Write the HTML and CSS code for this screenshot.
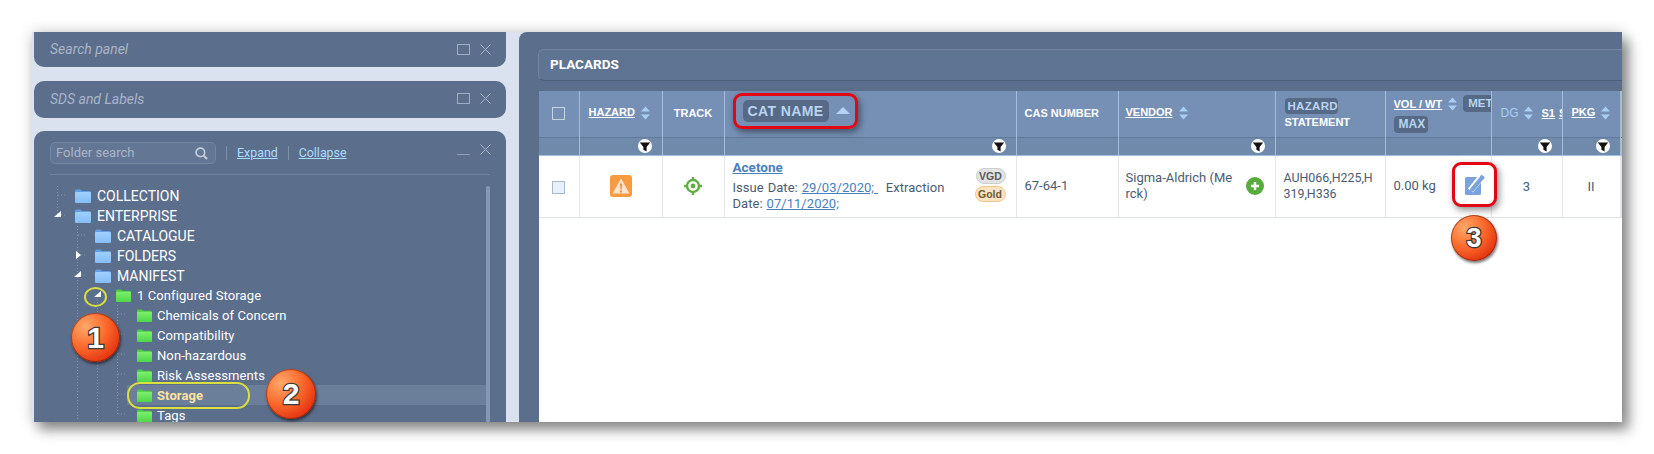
FILE: index.html
```html
<!DOCTYPE html>
<html lang="en">
<head>
<meta charset="utf-8">
<title>Placards</title>
<link rel="stylesheet" href="styles.css">
</head>
<body>
<svg class="defs" width="0" height="0" aria-hidden="true">
  <defs>
    <linearGradient id="gb" x1="0" y1="0" x2="0" y2="1"><stop offset="0" stop-color="#9fd0ff"/><stop offset="1" stop-color="#85bdf7"/></linearGradient>
    <linearGradient id="gg" x1="0" y1="0" x2="0" y2="1"><stop offset="0" stop-color="#7cf06c"/><stop offset="1" stop-color="#4fd748"/></linearGradient>
    <symbol id="folder-blue" viewBox="0 0 16 14"><path d="M0 2q0-1.500 1.500-1.500h4L7 2h7.500Q16 2 16 3.500V12.500Q16 14 14.500 14h-13Q0 14 0 12.500Z" fill="#5f9fe6"/><path d="M0 4q0-1 1-1h14q1 0 1 1v8.500q0 1.500-1.500 1.500h-13Q0 14 0 12.500Z" fill="url(#gb)"/></symbol>
    <symbol id="folder-green" viewBox="0 0 16 14"><path d="M0 2q0-1.500 1.500-1.500h4L7 2h7.500Q16 2 16 3.500V12.500Q16 14 14.500 14h-13Q0 14 0 12.500Z" fill="#4cc846"/><path d="M0 4q0-1 1-1h14q1 0 1 1v8.500q0 1.500-1.500 1.500h-13Q0 14 0 12.500Z" fill="url(#gg)"/></symbol>
    <symbol id="funnel" viewBox="0 0 14 14"><circle cx="7" cy="7" r="7" fill="#fff"/><path d="M1.800 3.500h10.400L8.600 8V12.500L5.400 10.800V8Z" fill="#111"/></symbol>
    <symbol id="sort" viewBox="0 0 9 14"><path d="M4.500 0.500 9 5.500H0ZM4.500 13.500 0 8.500H9Z"/></symbol>
    <symbol id="win-x" viewBox="0 0 11 11"><path d="M0.500 0.500 10.500 10.500M10.500 0.500 0.500 10.500" fill="none" stroke="currentColor" stroke-width="1"/></symbol>
  </defs>
</svg>

<div class="window">
  <aside class="side">
    <section class="panel panel-first">
      <span class="panel-title">Search panel</span>
      <span class="win-btns"><i class="win-square"></i><svg class="win-x"><use href="#win-x"/></svg></span>
    </section>
    <section class="panel panel-second">
      <span class="panel-title">SDS and Labels</span>
      <span class="win-btns"><i class="win-square"></i><svg class="win-x"><use href="#win-x"/></svg></span>
    </section>
    <section class="panel-tree">
      <div class="tree-tools">
        <div class="folder-search">
          <span>Folder search</span>
          <svg class="search-icon" viewBox="0 0 14 14"><circle cx="5.800" cy="5.800" r="4.600" fill="none" stroke="#c3ccd9" stroke-width="1.800"/><path d="M9.200 9.200 13 13" stroke="#c3ccd9" stroke-width="2.200"/></svg>
        </div>
        <a class="tool-link" href="#">Expand</a>
        <a class="tool-link" href="#">Collapse</a>
        <span class="win-btns tree-btns"><i class="win-min"></i><svg class="win-x"><use href="#win-x"/></svg></span>
      </div>
      <div class="tree">
        <svg class="tree-lines" width="452" height="236">
          <path d="M23.500 1V30M24 10H32M24 30H31M43.500 41V236M44 50H51M44 70H51M44 90H51M63.500 114V236M83.500 120V229M84 129H91M84 149H91M84 169H91M84 189H91M84 209H91M84 229H91"/>
        </svg>
        <div class="row l0 caps"><svg class="folder"><use href="#folder-blue"/></svg>COLLECTION</div>
        <div class="row l0 caps"><svg class="arrow arrow-open a-enterprise" viewBox="0 0 7 6"><path d="M7 0V6H0Z"/></svg><svg class="folder"><use href="#folder-blue"/></svg>ENTERPRISE</div>
        <div class="row l1 caps"><svg class="folder"><use href="#folder-blue"/></svg>CATALOGUE</div>
        <div class="row l1 caps"><svg class="arrow arrow-closed a-folders" viewBox="0 0 5 8"><path d="M0 0 5 4 0 8Z"/></svg><svg class="folder"><use href="#folder-blue"/></svg>FOLDERS</div>
        <div class="row l1 caps"><svg class="arrow arrow-open a-manifest" viewBox="0 0 7 6"><path d="M7 0V6H0Z"/></svg><svg class="folder"><use href="#folder-blue"/></svg>MANIFEST</div>
        <div class="row l2"><svg class="arrow arrow-open a-config" viewBox="0 0 7 6"><path d="M7 0V6H0Z"/></svg><svg class="folder folder-g"><use href="#folder-green"/></svg>1 Configured Storage</div>
        <div class="row l3"><svg class="folder folder-g"><use href="#folder-green"/></svg>Chemicals of Concern</div>
        <div class="row l3"><svg class="folder folder-g"><use href="#folder-green"/></svg>Compatibility</div>
        <div class="row l3"><svg class="folder folder-g"><use href="#folder-green"/></svg>Non-hazardous</div>
        <div class="row l3"><svg class="folder folder-g"><use href="#folder-green"/></svg>Risk Assessments</div>
        <div class="row l3 selected"><svg class="folder folder-g"><use href="#folder-green"/></svg>Storage</div>
        <div class="row l3"><svg class="folder folder-g"><use href="#folder-green"/></svg>Tags</div>
        <div class="scrollbar"></div>
      </div>
    </section>
  </aside>

  <main class="main">
    <div class="title-bar">PLACARDS</div>
    <div class="grid-wrap">
    <table class="grid">
      <colgroup>
        <col class="c-check"><col class="c-hazard"><col class="c-track"><col class="c-cat"><col class="c-cas"><col class="c-vendor"><col class="c-stmt"><col class="c-vol"><col class="c-dg"><col class="c-pkg"><col>
      </colgroup>
      <thead>
        <tr class="head">
          <th class="th-center"><i class="check"></i></th>
          <th class="th-hazard"><a href="#">HAZARD</a><svg class="sort"><use href="#sort"/></svg></th>
          <th class="th-center">TRACK</th>
          <th class="th-cat"><span class="cat-badge">CAT NAME</span><i class="sort-up"></i></th>
          <th class="th-cas">CAS NUMBER</th>
          <th class="th-vendor"><a href="#">VENDOR</a><svg class="sort"><use href="#sort"/></svg></th>
          <th class="th-stmt"><span class="tag tag-hazard">HAZARD</span><br>STATEMENT</th>
          <th class="th-vol"><div class="vol-inner"><a href="#">VOL / WT</a><svg class="sort"><use href="#sort"/></svg><span class="tag tag-met">MET</span></div><span class="tag tag-max">MAX</span></th>
          <th class="th-dg"><div class="dg-inner"><span class="dg">DG</span><svg class="sort sort-dg"><use href="#sort"/></svg><a class="s1" href="#">S1</a><a class="s2" href="#">S2</a></div></th>
          <th class="th-pkg"><a href="#">PKG</a><svg class="sort"><use href="#sort"/></svg></th>
          <th></th>
        </tr>
        <tr class="filters">
          <th></th>
          <th><svg class="funnel"><use href="#funnel"/></svg></th>
          <th></th>
          <th><svg class="funnel"><use href="#funnel"/></svg></th>
          <th></th>
          <th><svg class="funnel"><use href="#funnel"/></svg></th>
          <th></th>
          <th></th>
          <th><svg class="funnel"><use href="#funnel"/></svg></th>
          <th><svg class="funnel"><use href="#funnel"/></svg></th>
          <th></th>
        </tr>
      </thead>
      <tbody>
        <tr class="data">
          <td class="td-center"><i class="check check-row"></i></td>
          <td class="td-center">
            <svg class="warn" viewBox="0 0 22 22"><rect width="22" height="22" rx="3" fill="#f89b40"/><path d="M11 3.500 19.500 18.500H2.500Z" fill="#fbe3cd"/><path d="M10 8.500h2l-.4 6h-1.200ZM10 15.500h2v2h-2Z" fill="#f08a3a"/></svg>
          </td>
          <td class="td-center">
            <svg class="target" viewBox="0 0 18 18"><circle cx="9" cy="9" r="6" fill="none" stroke="#62ad46" stroke-width="2.400"/><circle cx="9" cy="9" r="2.400" fill="#62ad46"/><path d="M9 0V3.500M9 14.500V18M0 9H3.500M14.500 9H18" stroke="#62ad46" stroke-width="2.400"/></svg>
          </td>
          <td class="td-cat">
            <div class="cat-cell">
              <div class="cat-text">
                <a class="chem" href="#">Acetone</a>
                <p class="dates">Issue Date: <a href="#">29/03/2020;&nbsp;</a> &nbsp;Extraction Date: <a href="#">07/11/2020;</a></p>
              </div>
              <div class="pills"><span class="pill pill-vgd">VGD</span><span class="pill pill-gold">Gold</span></div>
            </div>
          </td>
          <td class="td-text">67-64-1</td>
          <td class="td-text td-vendor">
            <div class="vendor-cell"><span class="vendor">Sigma-Aldrich (Merck)</span>
              <svg class="plus" viewBox="0 0 18 18"><circle cx="9" cy="9" r="9" fill="#5aab3d"/><path d="M9 5V13M5 9H13" stroke="#fff" stroke-width="2.400"/></svg>
            </div>
          </td>
          <td class="td-text td-wrap">AUH066,H225,H319,H336</td>
          <td class="td-text">0.00 kg</td>
          <td class="td-center td-num">3</td>
          <td class="td-center td-num">II</td>
          <td></td>
        </tr>
      </tbody>
    </table>
    </div>
  </main>

  <div class="mark-oval oval-arrow"></div>
  <div class="mark-oval oval-storage"></div>
  <div class="mark-red red-cat"></div>
  <div class="mark-red red-edit">
    <svg class="edit" viewBox="0 0 20 22"><rect x="0" y="3" width="16" height="18" rx="1.500" fill="#7aa3db"/><path d="M5.500 16.500 16 3.500" stroke="#fff" stroke-width="6.500" stroke-linecap="butt"/><path d="M5 17.500H8.500L18.500 5 15.500 2.300 5.300 14.500Z" fill="#7aa3db"/><path d="M15.500 1.500Q16.500.5 17.800 1.500L19 2.500Q20 3.500 19.300 4.500L18.500 5.500 14.800 2.500Z" fill="#7aa3db"/></svg>
  </div>
  <div class="step step-1">1</div>
  <div class="step step-2">2</div>
  <div class="step step-3">3</div>
</div>
</body>
</html>
```
FILE: styles.css
```css
* { box-sizing: border-box; }
html, body { margin: 0; height: 100%; background: #fff; overflow: hidden; }
body { padding: 32px 32px 32px 32px; font-family: Roboto, "Liberation Sans", sans-serif; }
.defs { position: absolute; }
a { color: inherit; }

.window {
  position: relative;
  display: flex;
  width: 1590px;
  height: 390px;
  background: #d9e2ee;
  box-shadow: 7px 8px 12px rgba(0,0,0,.42), 0 0 14px rgba(0,0,0,.18);
}

/* left column */
.side { width: 487px; flex: none; padding-left: 2px; height: 390px; overflow: hidden; }
.panel {
  position: relative;
  display: flex;
  align-items: center;
  width: 472px;
  padding: 0 16px 2px;
  background: #5b6e8c;
  border-radius: 10px;
}
.panel-first { height: 35px; border-radius: 0 0 10px 10px; margin-bottom: 14px; }
.panel-second { height: 37px; margin-bottom: 13px; }
.panel-title { font-size: 14px; font-style: italic; color: #a8b5c8; }
.win-btns { position: absolute; right: 15px; top: 12px; display: flex; align-items: flex-start; gap: 10px; }
.win-square { display: block; width: 13px; height: 11px; border: 1px solid #a0aec2; }
.win-x { display: block; width: 11px; height: 11px; color: #a8b5c8; }
.win-min { display: block; width: 13px; height: 11px; border-bottom: 1px solid #8d9cb3; }
.panel-tree {
  position: relative;
  width: 472px;
  height: 300px;
  background: #5b6e8c;
  border-radius: 10px 10px 0 0;
  overflow: hidden;
}
.tree-tools {
  display: flex;
  align-items: center;
  height: 44px;
  margin: 0 16px;
  border-bottom: 1px solid #6f819d;
  font-size: 13px;
}
.folder-search {
  display: flex;
  align-items: center;
  justify-content: space-between;
  width: 166px;
  height: 22px;
  margin-top: 1px;
  padding: 0 7px 2px 5px;
  background: #637693;
  border: 1px solid #74869f;
  border-radius: 5px;
  color: #a9b5c7;
  font-size: 13px;
}
.search-icon { width: 13px; height: 13px; margin-top: 2px; }
.tool-link { color: #a9dcff; font-size: 12.400px; text-decoration: underline; padding: 0 10px; height: 14px; line-height: 14px; border-left: 1px solid #7f90a9; margin-left: 10px; }
.tool-link + .tool-link { margin-left: 0; }
.tree-btns { top: 13px; right: 15px; }
.tree { position: relative; margin-top: 10px; width: 452px; }
.tree-lines { position: absolute; left: 0; top: 0; fill: none; stroke: #8293ab; stroke-width: 1; stroke-dasharray: 1 2; }
.row { position: relative; display: flex; align-items: center; height: 20px; color: #fff; font-size: 13px; letter-spacing: .1px; white-space: nowrap; }
.caps { padding-top: 2px; font-size: 14px; letter-spacing: 0; }
.l0 { padding-left: 41px; }
.l1 { padding-left: 61px; }
.l2 { padding-left: 82px; }
.l3 { padding-left: 103px; }
.folder { flex: none; width: 16px; height: 14px; margin-right: 6px; }
.folder-g { width: 15px; height: 15px; margin-right: 5px; }
.l2 .folder-g { margin-right: 6px; }
.selected { margin-left: 93px; padding-left: 10px; background: #6b7e9a; color: #ffe3a0; font-weight: 700; }
.arrow { position: absolute; fill: #fff; }
.arrow-open { width: 7px; height: 6px; }
.arrow-closed { width: 5px; height: 8px; }
.a-enterprise { left: 20px; top: 6px; }
.a-folders { left: 42px; top: 6px; }
.a-manifest { left: 40px; top: 6px; }
.a-config { left: 60px; top: 6px; }
.scrollbar { position: absolute; left: 452px; top: 1px; width: 4px; height: 240px; background: #8498b8; border-radius: 2px 2px 0 0; }

/* main */
.main {
  display: flex;
  flex-direction: column;
  flex: 1;
  min-width: 0;
  height: 390px;
  padding: 17px 0 0 19px;
  background: #5b6e8c;
  border-radius: 8px 0 0 0;
  overflow: hidden;
}
.title-bar {
  flex: none;
  height: 32px;
  margin-bottom: 10px;
  padding-left: 11px;
  line-height: 28px;
  background: #5f7492;
  border: 1px solid #72859f;
  border-bottom-color: #4d5f79;
  border-right: 0;
  border-radius: 6px 0 0 6px;
  color: #fff;
  font-size: 13.500px;
  font-weight: 700;
}
.grid-wrap { flex: 1; margin-left: 1px; background: #fff; }
.grid {
  table-layout: fixed;
  border-collapse: collapse;
  width: 1083px;
  color: #4b5c72;
  font-family: Roboto, "Liberation Sans", sans-serif;
}
.c-check { width: 40px; }
.c-hazard { width: 83px; }
.c-track { width: 62px; }
.c-cat { width: 292px; }
.c-cas { width: 102px; }
.c-vendor { width: 157px; }
.c-stmt { width: 110px; }
.c-vol { width: 106px; }
.c-dg { width: 71px; }
.c-pkg { width: 58px; }
.head th {
  height: 46px;
  padding: 0 0 2px 10px;
  background: #7690b5;
  border-right: 1px solid #a7bcd8;
  color: #fff;
  font: 700 11px "Liberation Sans", sans-serif;
  text-align: left;
  vertical-align: middle;
  white-space: nowrap;
  overflow: hidden;
}
.head a { color: #fff; }
.head th.th-center { padding: 0 0 2px; text-align: center; }
.head th.th-hazard { padding-left: 9px; }
.head th.th-cas { padding-left: 8px; }
.head th.th-vendor { padding-left: 7px; }
.head th.th-cat { padding: 9px 0 0 18px; vertical-align: top; }
.head th.th-stmt { padding: 7px 0 0 9px; vertical-align: top; line-height: 16px; }
.head th.th-vol { padding: 4px 0 0 8px; vertical-align: top; }
.head th.th-dg, .head th.th-pkg { padding-left: 9px; }
.vol-inner, .dg-inner { display: flex; align-items: center; overflow: hidden; }
.vol-inner { height: 17px; }
.sort { display: inline-block; flex: none; width: 9px; height: 14px; margin-left: 6px; fill: #a7cdf3; vertical-align: middle; }
.sort-dg { margin-left: 5px; }
.cat-badge {
  display: inline-block;
  height: 22px;
  padding: 0 5px;
  background: #566a88;
  border-radius: 5px;
  color: #b9d4ef;
  font-size: 14px;
  letter-spacing: .4px;
  line-height: 22px;
}
.sort-up {
  display: inline-block;
  width: 0;
  height: 0;
  margin: 0 0 5px 7px;
  border: 7px solid transparent;
  border-top: 0;
  border-bottom: 7px solid #b3d2f5;
  vertical-align: middle;
}
.tag {
  display: inline-block;
  padding: 0 5px;
  background: #566a88;
  border-radius: 4px;
  color: #b9d4ef;
  font-size: 11.500px;
  line-height: 17px;
}
.tag-hazard { width: 53px; height: 16px; padding: 0 3px; line-height: 16px; letter-spacing: .3px; }
.tag-met { flex: none; margin-left: 6px; width: 40px; }
.tag-max { margin: 4px 0 0 0; width: 34px; font-size: 12px; }
.dg { color: #a9ccf0; font-weight: 400; font-size: 12px; }
.s1 { margin-left: 9px; flex: none; }
.s2 { margin-left: 4px; flex: none; }
.filters th {
  height: 18px;
  padding: 0 10px 0 0;
  background: #6f8aab;
  border-top: 1px solid #627a9b;
  border-bottom: 1px solid #a5c0de;
  border-right: 1px solid #a7bcd8;
  text-align: right;
  vertical-align: middle;
}
.funnel { display: block; width: 14px; height: 14px; margin-left: auto; }
.check { display: inline-block; width: 13px; height: 13px; border: 1px solid #c6d3e3; vertical-align: middle; }
.check-row { background: #e9f0f8; border-color: #a9b9cc; }
.data td {
  height: 62px;
  padding: 0;
  border-right: 1px solid #e4e7eb;
  border-bottom: 1px solid #dfe3e8;
  font-size: 13px;
  vertical-align: middle;
}
.td-center { text-align: center; }
.data .td-text { padding-left: 8px; line-height: 16px; }
.data .td-vendor { padding-left: 7px; }
.data .td-wrap { word-break: break-all; padding-left: 8px; padding-right: 6px; font-size: 12.400px; }
.warn { display: block; width: 22px; height: 22px; margin: 0 auto; }
.target { display: block; width: 18px; height: 18px; margin: 0 auto; }
.cat-cell { display: flex; justify-content: space-between; align-items: center; padding: 0 10px 0 8px; }
.cat-text { width: 220px; margin-top: -1px; }
.chem { display: block; color: #4a80bb; font-size: 13.500px; font-weight: 700; line-height: 16px; margin-bottom: 5px; }
.dates { margin: 0; line-height: 16px; letter-spacing: .05px; word-spacing: .6px; }
.dates a { color: #4a80bb; }
.pills { display: flex; flex-direction: column; align-items: flex-end; gap: 2px; margin-top: -3px; }
.pill { display: block; height: 16px; padding: 0 2px; border-radius: 8px; border: 1px solid #cfcfcf; background: #e3e3e3; color: #5a5a5a; font: 700 10.500px/14px "Liberation Sans", sans-serif; text-align: center; }
.pill-vgd { width: 30px; }
.pill-gold { width: 31px; background: #fde3bf; border-color: #f6c58e; color: #6b5a3a; }
.vendor-cell { display: flex; align-items: center; justify-content: space-between; padding-right: 11px; }
.vendor { width: 110px; word-break: break-all; }
.plus { flex: none; width: 18px; height: 18px; }
.td-num { font-size: 13px; }

/* annotations laid over the screenshot */
.mark-oval { position: absolute; border: 2px solid #d9df3c; }
.oval-arrow { left: 52px; top: 255px; width: 23px; height: 20px; border-radius: 50%; }
.oval-storage { left: 95px; top: 350px; width: 123px; height: 27px; border-radius: 13px; }
.mark-red { position: absolute; border: 3px solid #e30613; border-radius: 9px; box-shadow: 2px 3px 7px rgba(0,0,0,.45); }
.red-cat { left: 701px; top: 61px; width: 125px; height: 36px; }
.red-edit { display: flex; align-items: center; justify-content: center; left: 1420px; top: 130px; width: 45px; height: 45px; background: #fff; }
.edit { width: 20px; height: 22px; }
.step {
  position: absolute;
  border-radius: 50%;
  background: radial-gradient(circle at 30% 28%, #ffa96a 0%, #fb6a2c 42%, #e2300f 80%, #c8230a 100%);
  box-shadow: 1px 2px 3px rgba(0,0,0,.55), inset 0 0 0 1px rgba(110,20,0,.55);
  color: #fff;
  font: 700 30px/1 "Liberation Sans", sans-serif;
  display: flex;
  align-items: center;
  justify-content: center;
  -webkit-text-stroke: 2.500px #3a3a3a;
  paint-order: stroke fill;
}
.step-1 { left: 39px; top: 281px; width: 49px; height: 49px; }
.step-2 { left: 234px; top: 337px; width: 50px; height: 50px; }
.step-3 { left: 1419px; top: 183px; width: 46px; height: 46px; font-size: 27px; }
```
